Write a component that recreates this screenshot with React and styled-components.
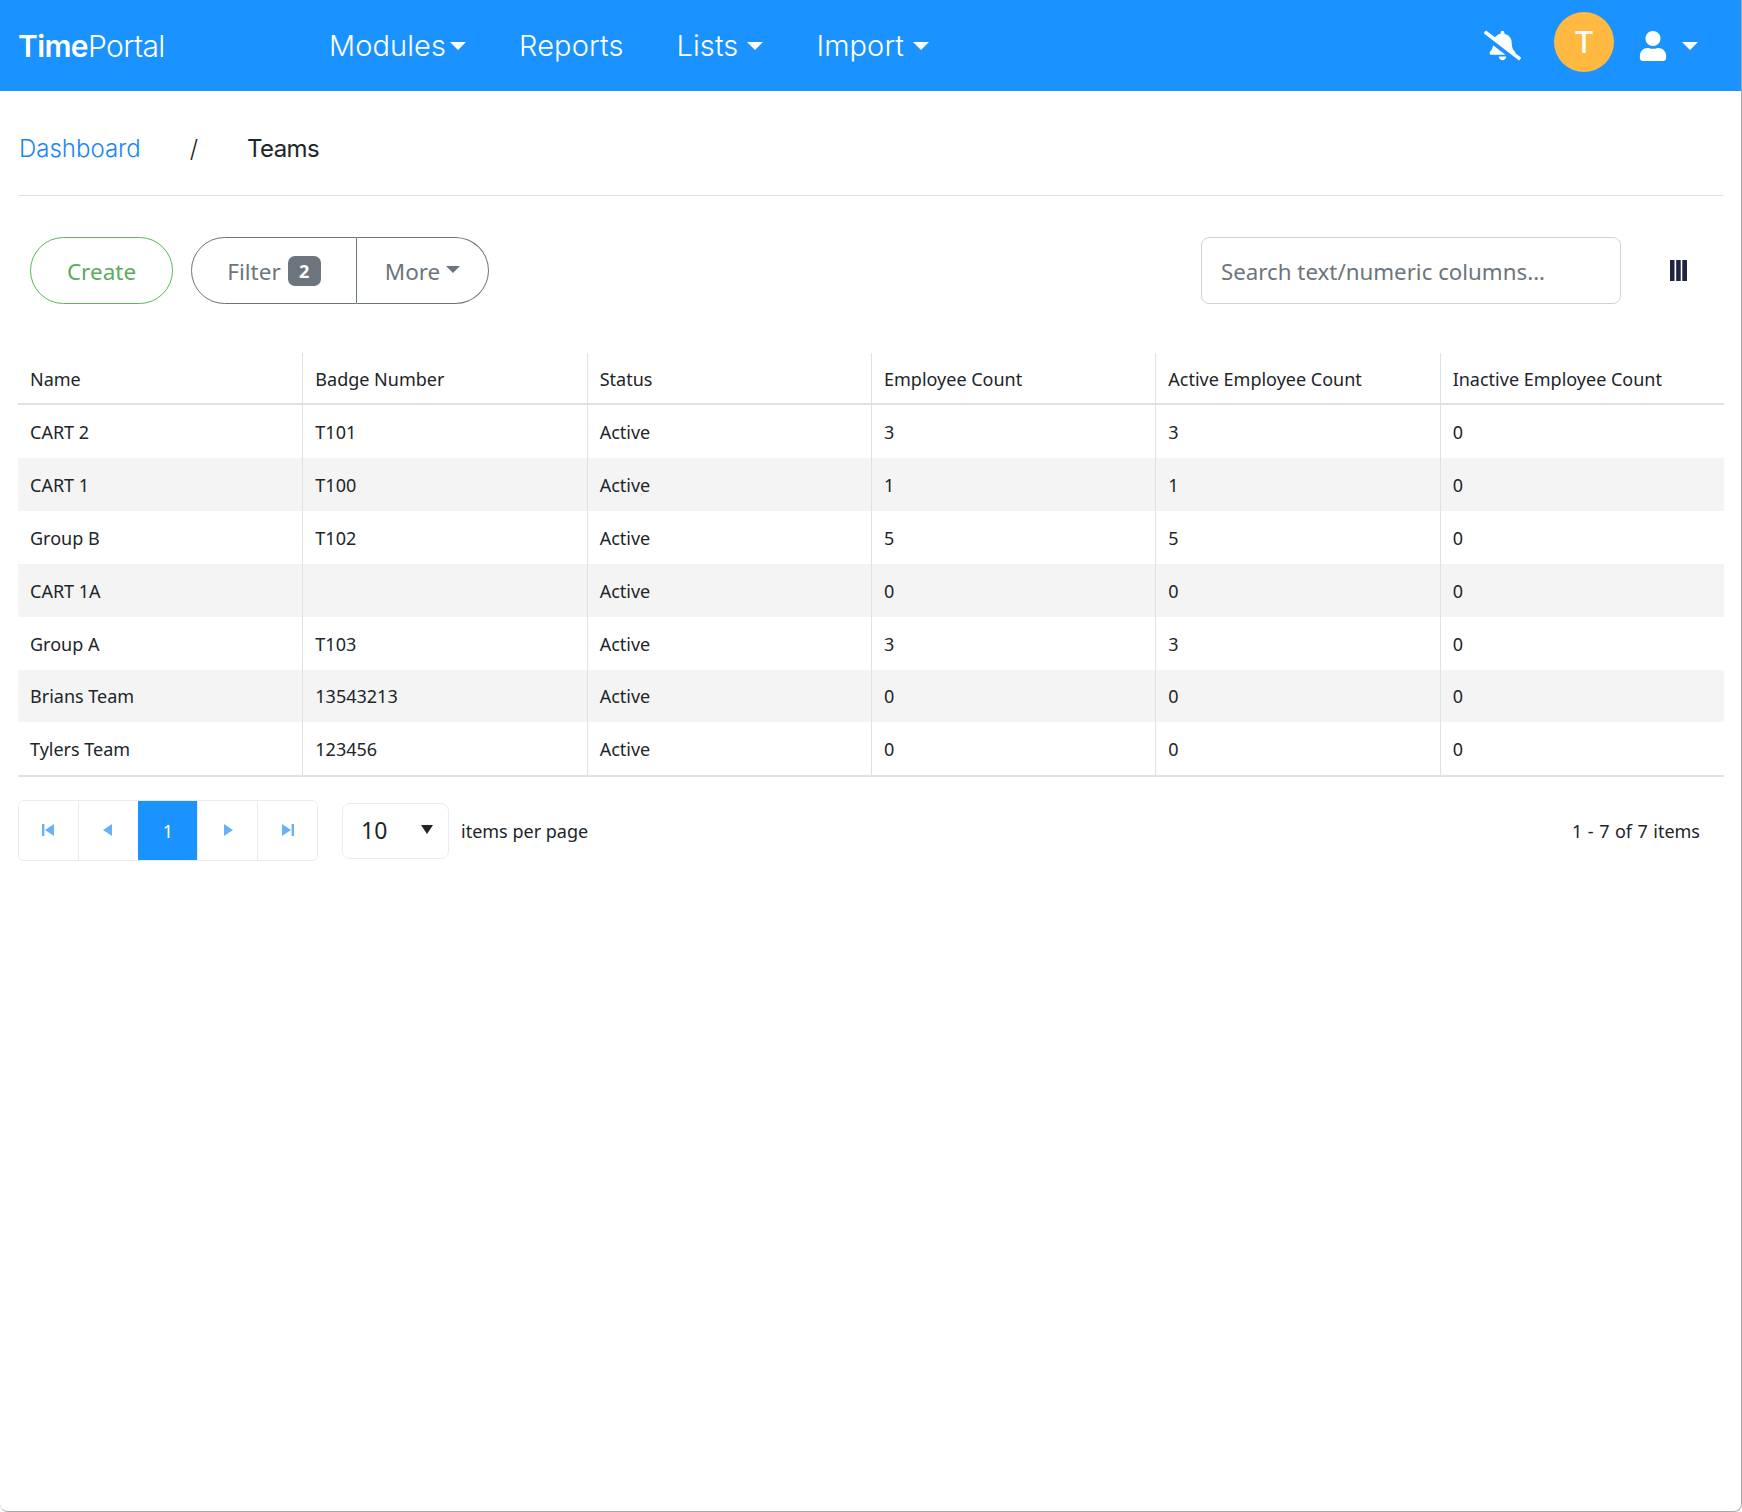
import styled, { createGlobalStyle } from 'styled-components'
import { FaBellSlash, FaUser } from 'react-icons/fa'

const GlobalStyle = createGlobalStyle`
  html, body { margin: 0; padding: 0; background: #fff; }
  * { box-sizing: border-box; }
  body { font-family: "Noto Sans", "Open Sans", sans-serif; color: #212529; }
`

const Shell = styled.div`
  width: 1742px;
  height: 1512px;
  background: #fff;
  border-right: 1px solid #a8a8a8;
  border-bottom: 1px solid #a8a8a8;
  border-radius: 0 0 8px 8px;
  overflow: hidden;
`

const Navbar = styled.nav`
  height: 91px;
  background: #1a92ff;
  display: flex;
  align-items: center;
  padding: 0 43px 0 18px;
  color: #fff;
  font-family: Inter, sans-serif;
`

const Brand = styled.a`
  width: 311px;
  font-size: 30px;
  letter-spacing: -0.6px;
  font-weight: 300;
  b { font-weight: 600; }
`

const NavLinks = styled.div`
  display: flex;
  align-items: center;
  gap: 53px;
  flex: 1;
`

const NavLink = styled.a`
  display: flex;
  align-items: center;
  font-size: 29px;
  font-weight: 300;
  letter-spacing: 0.1px;
`

const Caret = styled.span`
  display: inline-block;
  margin-left: ${props => props.$gap ?? 6}px;
  margin-bottom: ${props => props.$lift || 0}px;
  border-top: ${props => props.$height || props.$size || 8}px solid ${props => props.$color || '#fff'};
  border-left: ${props => props.$size || 8}px solid transparent;
  border-right: ${props => props.$size || 8}px solid transparent;
`

const NavRight = styled.div`
  display: flex;
  align-items: center;
  svg { display: block; }
`

const Avatar = styled.div`
  width: 60px;
  height: 60px;
  margin: 0 24px 7px 33px;
  border-radius: 50%;
  background: #ffb940;
  display: flex;
  align-items: center;
  justify-content: center;
  font-size: 30px;
  font-weight: 500;
`

const Content = styled.main`
  padding: 0 17px 0 18px;
`

const Breadcrumb = styled.div`
  height: 105px;
  display: flex;
  align-items: center;
  padding: 12px 1px 1px;
  font-family: Inter, sans-serif;
  font-size: 24px;
  font-weight: 300;
  border-bottom: 1px solid #dee2e6;
  a { color: #1a86f0; }
  i { font-style: normal; margin: 0 49px; }
  span { font-weight: 400; letter-spacing: -0.6px; }
`

const Toolbar = styled.div`
  display: flex;
  align-items: center;
  height: 67px;
  margin-top: 41px;
  padding-left: 12px;
`

const CreateButton = styled.button`
  width: 143px;
  height: 67px;
  padding: 2px 0 0;
  border: 1px solid #5cb85c;
  border-radius: 34px;
  background: #fff;
  color: #5cab5c;
  font: inherit;
  font-size: 22.5px;
`

const ButtonGroup = styled.div`
  display: flex;
  margin-left: 18px;
  height: 67px;
`

const GroupButton = styled.button`
  display: flex;
  align-items: center;
  justify-content: center;
  width: ${props => props.$width}px;
  height: 67px;
  padding: 2px 0 0;
  background: #fff;
  color: #6c757d;
  font: inherit;
  font-size: 22.5px;
  border: 1px solid #6c757d;
  border-left: ${props => props.$last ? 'none' : '1px solid #6c757d'};
  border-radius: ${props => props.$last ? '0 34px 34px 0' : '34px 0 0 34px'};
`

const Badge = styled.span`
  display: inline-flex;
  align-items: center;
  justify-content: center;
  width: 33px;
  height: 30px;
  margin: 0 0 2px 7px;
  border-radius: 7px;
  background: #6c757d;
  color: #fff;
  font-size: 18px;
  font-weight: 700;
`

const SearchInput = styled.input`
  width: 420px;
  height: 67px;
  margin-left: auto;
  padding: 2px 19px 0;
  border: 1px solid #ced4da;
  border-radius: 8px;
  font: inherit;
  font-size: 22.3px;
  color: #495057;
  outline: none;
  &::placeholder { color: #6c757d; opacity: 1; }
`

const ColumnsToggle = styled.button`
  width: 17px;
  height: 21px;
  margin: 0 37px 0 49px;
  padding: 0;
  border: none;
  background: none;
  svg { display: block; }
`

const Table = styled.table`
  width: 100%;
  margin-top: 49px;
  border-collapse: separate;
  border-spacing: 0;
  table-layout: fixed;
  font-size: 18px;
  border-bottom: 2px solid #dee2e6;
`

const HeadCell = styled.th`
  height: 52px;
  padding: 2px 12px 0;
  text-align: left;
  font-weight: 400;
  border-bottom: 2px solid #dee2e6;
  &:not(:first-child) { border-left: 1px solid #dee2e6; }
`

const Row = styled.tr`
  background: ${props => props.$odd ? '#f4f4f4' : '#fff'};
`

const Cell = styled.td`
  height: ${props => props.$short ? 52 : 53}px;
  padding: 0 12px;
  &:not(:first-child) { border-left: 1px solid #dee2e6; }
`

const Footer = styled.div`
  display: flex;
  align-items: center;
  margin-top: 23px;
  height: 61px;
  font-size: 18px;
`

const Pager = styled.div`
  display: flex;
  width: 300px;
  height: 61px;
  border: 1px solid #e9ecef;
  border-radius: 6px;
  overflow: hidden;
`

const PagerCell = styled.div`
  flex: 1;
  display: flex;
  align-items: center;
  justify-content: center;
  background: ${props => props.$active ? '#1a92ff' : '#fff'};
  color: #fff;
  font-size: 18px;
  border-left: ${props => props.$first ? 'none' : '1px solid ' + (props.$active ? '#1a92ff' : '#e9ecef')};
  svg { display: block; margin-bottom: 2px; }
`

const PageSize = styled.div`
  display: flex;
  align-items: center;
  justify-content: space-between;
  width: 107px;
  height: 56px;
  margin: 0 12px 0 24px;
  padding: 0 15px 2px 18px;
  border: 1px solid #e9ecef;
  border-radius: 8px;
  font-size: 23px;
`

const ItemCount = styled.span`
  margin-left: auto;
  margin-right: 24px;
  word-spacing: 0.8px;
`

const columns = ['Name', 'Badge Number', 'Status', 'Employee Count', 'Active Employee Count', 'Inactive Employee Count']

const teams = [
  ['CART 2', 'T101', 'Active', 3, 3, 0],
  ['CART 1', 'T100', 'Active', 1, 1, 0],
  ['Group B', 'T102', 'Active', 5, 5, 0],
  ['CART 1A', '', 'Active', 0, 0, 0],
  ['Group A', 'T103', 'Active', 3, 3, 0],
  ['Brians Team', '13543213', 'Active', 0, 0, 0],
  ['Tylers Team', '123456', 'Active', 0, 0, 0],
]

function PagerIcon({ dir, bar }) {
  return (
    <svg width="14" height="14" viewBox="0 0 14 14" fill="#66b2fa">
      {dir == 'left'
        ? <polygon points={bar ? '13,1 13,13 4,7' : '11,1 11,13 2,7'} />
        : <polygon points={bar ? '1,1 1,13 10,7' : '3,1 3,13 12,7'} />}
      {bar && (dir == 'left'
        ? <rect x="1" y="1" width="2.4" height="12" />
        : <rect x="10.6" y="1" width="2.4" height="12" />)}
    </svg>
  )
}

function App() {
  return (
    <Shell>
      <GlobalStyle />
      <Navbar>
        <Brand><b>Time</b>Portal</Brand>
        <NavLinks>
          <NavLink>Modules<Caret $gap={4} /></NavLink>
          <NavLink>Reports</NavLink>
          <NavLink>Lists<Caret $gap={9} /></NavLink>
          <NavLink>Import<Caret $gap={9} /></NavLink>
        </NavLinks>
        <NavRight>
          <FaBellSlash size={37} />
          <Avatar>T</Avatar>
          <FaUser size={30} />
          <Caret $gap={14} />
        </NavRight>
      </Navbar>
      <Content>
        <Breadcrumb>
          <a>Dashboard</a>
          <i>/</i>
          <span>Teams</span>
        </Breadcrumb>
        <Toolbar>
          <CreateButton>Create</CreateButton>
          <ButtonGroup>
            <GroupButton $width={166}>Filter<Badge>2</Badge></GroupButton>
            <GroupButton $width={132} $last>More<Caret $color="#6c757d" $size={7} $gap={6} $lift={4} /></GroupButton>
          </ButtonGroup>
          <SearchInput placeholder="Search text/numeric columns..." />
          <ColumnsToggle>
            <svg width="17" height="21" viewBox="0 0 17 21" fill="#20243f">
              <rect x="0" width="4.5" height="21" />
              <rect x="6.2" width="4.5" height="21" />
              <rect x="12.3" width="4.7" height="21" />
            </svg>
          </ColumnsToggle>
        </Toolbar>
        <Table>
          <thead>
            <tr>{columns.map(c => <HeadCell key={c}>{c}</HeadCell>)}</tr>
          </thead>
          <tbody>
            {teams.map((team, i) => (
              <Row key={team[0]} $odd={i % 2 == 1}>
                {team.map((v, j) => <Cell key={j} $short={i == 5}>{v}</Cell>)}
              </Row>
            ))}
          </tbody>
        </Table>
        <Footer>
          <Pager>
            <PagerCell $first><PagerIcon dir="left" bar /></PagerCell>
            <PagerCell><PagerIcon dir="left" /></PagerCell>
            <PagerCell $active>1</PagerCell>
            <PagerCell><PagerIcon dir="right" /></PagerCell>
            <PagerCell><PagerIcon dir="right" bar /></PagerCell>
          </Pager>
          <PageSize>10<Caret $color="#212529" $size={6} $height={9} $gap={0} /></PageSize>
          <span>items per page</span>
          <ItemCount>1 - 7 of 7 items</ItemCount>
        </Footer>
      </Content>
    </Shell>
  )
}

export default App
